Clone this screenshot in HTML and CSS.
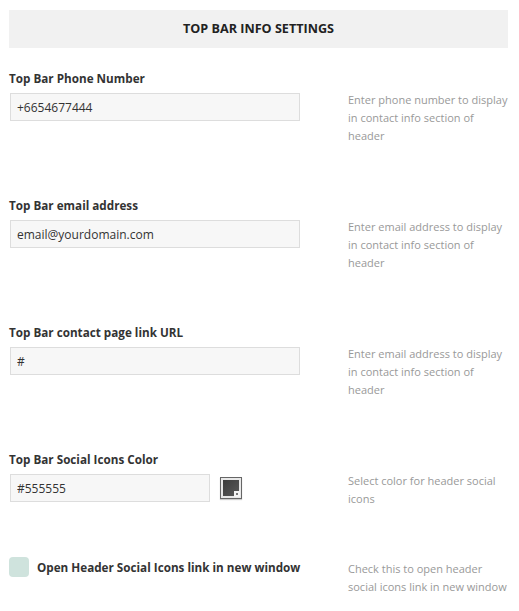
FILE: index.html
```html
<!DOCTYPE html>
<html lang="en">

<head>
    <meta charset="UTF-8">
    <meta name="viewport" content="width=device-width, initial-scale=1.0">
    <title>Top Bar Info Settings</title>
    <link rel="stylesheet" href="styles.css">
</head>

<body>
    <div class="settings">
        <h3 class="section-title">TOP BAR INFO SETTINGS</h3>

        <div class="option">
            <label class="option-label" for="phone">Top Bar Phone Number</label>
            <div class="option-row">
                <div class="option-field">
                    <input type="text" id="phone" class="text-input" value="+6654677444">
                </div>
                <p class="option-desc">Enter phone number to display in contact info section of header</p>
            </div>
        </div>

        <div class="option">
            <label class="option-label" for="email">Top Bar email address</label>
            <div class="option-row">
                <div class="option-field">
                    <input type="text" id="email" class="text-input" value="email@yourdomain.com">
                </div>
                <p class="option-desc">Enter email address to display in contact info section of header</p>
            </div>
        </div>

        <div class="option">
            <label class="option-label" for="contact">Top Bar contact page link URL</label>
            <div class="option-row">
                <div class="option-field">
                    <input type="text" id="contact" class="text-input" value="#">
                </div>
                <p class="option-desc">Enter email address to display in contact info section of header</p>
            </div>
        </div>

        <div class="option option-short">
            <label class="option-label" for="iconcolor">Top Bar Social Icons Color</label>
            <div class="option-row">
                <div class="option-field">
                    <input type="text" id="iconcolor" class="text-input color-input" value="#555555">
                    <!-- カラーピッカー -->
                    <span class="swatch"><span class="swatch-color"></span></span>
                </div>
                <p class="option-desc">Select color for header social icons</p>
            </div>
        </div>

        <div class="option-row check-row">
            <div class="option-field">
                <span class="checkbox"></span>
                <span class="check-label">Open Header Social Icons link in new window</span>
            </div>
            <p class="option-desc">Check this to open header social icons link in new window</p>
        </div>
    </div>
</body>

</html>
```

FILE: styles.css
```css
body {
    font-family: "Open Sans", "Liberation Sans", sans-serif;
    margin: 0;
    padding: 0;
    color: #333;
    background: #fff;
}

.settings {
    padding: 10px 11px 0 9px;
}

.section-title {
    margin: 0;
    height: 38px;
    line-height: 38px;
    background-color: #f1f1f1;
    text-align: center;
    font-size: 12.6px;
    font-weight: 700;
    color: #222;
}

.option {
    margin-top: 21px;
    min-height: 106px;
}

.option-short {
    min-height: 107px;
}

.option-label {
    display: block;
    font-size: 11.7px;
    font-weight: 700;
    line-height: 18px;
    color: #333;
    margin-bottom: 6px;
}

.option-row {
    display: flex;
    align-items: flex-start;
}

.option-field {
    width: 339px;
    display: flex;
    align-items: center;
    padding-left: 1px;
    box-sizing: border-box;
}

.text-input {
    width: 290px;
    height: 28px;
    box-sizing: border-box;
    padding: 0 6px;
    border: 1px solid #ddd;
    background-color: #f7f7f7;
    font-family: inherit;
    font-size: 12px;
    color: #333;
    outline: none;
}

.color-input {
    width: 200px;
}

/* カラーピッカーの見本 */
.swatch {
    position: relative;
    width: 22px;
    height: 22px;
    box-sizing: border-box;
    margin-left: 10px;
    border: 1px solid #666;
    padding: 2px;
    background: #e8e8e8;
    box-shadow: 0 1px 1px rgba(0, 0, 0, 0.2);
}

.swatch-color {
    display: block;
    width: 16px;
    height: 16px;
    background: linear-gradient(135deg, #3c3c3c, #5a5a5a);
}

.swatch::after {
    content: "";
    position: absolute;
    right: 1px;
    bottom: 1px;
    width: 6px;
    height: 6px;
    background: #f4f4f4 linear-gradient(#777, #777) no-repeat 2px 2px / 2px 2px;
}

.option-desc {
    margin: -2px 0 0;
    flex: 1;
    font-size: 11px;
    line-height: 18px;
    color: #999;
}

.check-row .option-field {
    padding-left: 0;
    padding-top: 0;
}

.check-row .option-desc {
    margin-top: 3px;
}

.checkbox {
    width: 20px;
    height: 20px;
    border-radius: 4px;
    background-color: #cfe3dd;
}

.check-label {
    margin-left: 8px;
    font-size: 11.7px;
    font-weight: 700;
    color: #333;
}
```
